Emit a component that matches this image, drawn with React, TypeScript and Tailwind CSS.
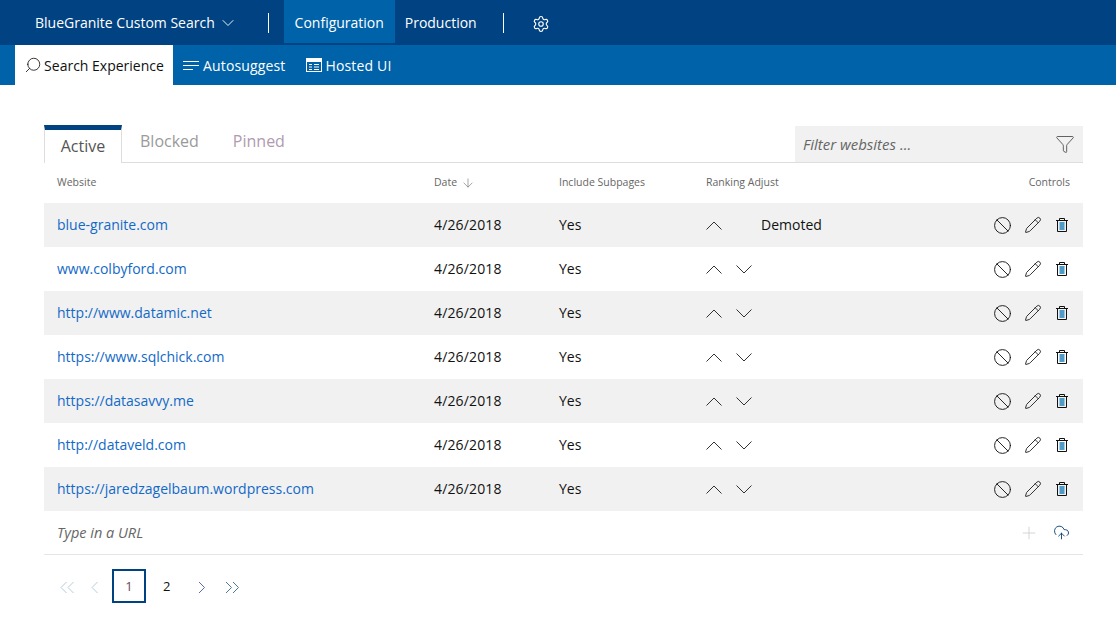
import { ArrowDown, ChevronDown, Search, Settings, Ban, Pencil, Funnel, Plus, CloudUpload } from 'lucide-react'

const SITES = [
  'blue-granite.com',
  'www.colbyford.com',
  'http://www.datamic.net',
  'https://www.sqlchick.com',
  'https://datasavvy.me',
  'http://dataveld.com',
  'https://jaredzagelbaum.wordpress.com',
]

function Chev({ dir, className }: { dir: 'up' | 'down'; className?: string }) {
  return (
    <svg width="16" height="9" viewBox="0 0 16 9" fill="none" stroke="currentColor" strokeWidth="1" className={className}>
      <path d={dir === 'up' ? 'M0.5 8.5 8 1l7.5 7.5' : 'M0.5 0.5 8 8l7.5-7.5'} />
    </svg>
  )
}

function PageChev({ dir, double, className }: { dir: 'left' | 'right'; double?: boolean; className?: string }) {
  const d = dir === 'left' ? 'M6.5 1 1 6.5 6.5 12' : 'M1 1l5.5 5.5L1 12'
  return (
    <svg width={double ? 14 : 8} height="13" viewBox={double ? '0 0 14 13' : '0 0 8 13'} fill="none" stroke="currentColor" strokeWidth="1" className={className}>
      <path d={d} />
      {double && <path d={d} transform="translate(7 0)" />}
    </svg>
  )
}

function TrashIcon() {
  return (
    <svg width="16" height="16" viewBox="0 0 16 16" fill="none" stroke="#111" strokeWidth="1">
      <path d="M2 3.5h12M5.5 3.5v-2h5v2M3.5 3.5v11h9v-11" />
      <rect x="5.5" y="5" width="5" height="8" fill="#4f9bc8" stroke="none" />
    </svg>
  )
}

function HostedIcon() {
  return (
    <svg width="16" height="14" viewBox="0 0 16 14" fill="none" stroke="white" strokeWidth="1">
      <rect x="0.5" y="0.5" width="15" height="13" />
      <rect x="0.5" y="0.5" width="15" height="3" fill="white" />
      <path d="M3 6.5h3M3 9h3M3 11.5h3M8 6.5h5M8 9h5M8 11.5h5" />
    </svg>
  )
}

function ListIcon() {
  return (
    <svg width="16" height="11" viewBox="0 0 16 11" fill="none" stroke="white" strokeWidth="1">
      <path d="M0 1.5h16M0 5.5h16M0 9.5h10" />
    </svg>
  )
}

function Row({ site, idx }: { site: string; idx: number }) {
  return (
    <div className={`flex h-11 items-center text-[14px] ${idx % 2 === 0 ? 'bg-[#f1f1f1]' : 'bg-white'}`}>
      <a className="w-[390px] pb-0.5 pl-[13px] text-[#1269c7]">{site}</a>
      <span className="w-[125px] pb-0.5 tracking-[0.15px] text-[#111]">4/26/2018</span>
      <span className="w-[147px] pb-0.5 text-[#111]">Yes</span>
      <div className="flex flex-1 items-center">
        <Chev dir="up" className="text-[#333]" />
        {idx === 0 ? (
          <span className="ml-[39px] pb-0.5 text-[#111]">Demoted</span>
        ) : (
          <Chev dir="down" className="ml-[14px] text-[#333]" />
        )}
      </div>
      <div className="flex items-center gap-[12px] pr-[13px]">
        <Ban size={19} strokeWidth={1.15} className="text-[#111]" />
        <Pencil size={18} strokeWidth={1.15} className="text-[#111]" />
        <TrashIcon />
      </div>
    </div>
  )
}

export default function App() {
  return (
    <div className="min-h-[636px] bg-white font-['Open_Sans',sans-serif]">
      {/* Top nav */}
      <div className="flex h-[45px] bg-[#004282] text-[14px] text-white">
        <div className="flex h-[45px] items-center pl-[35px]">
          <span>BlueGranite Custom Search</span>
          <ChevronDown size={20} strokeWidth={1.1} className="ml-[3px]" />
        </div>
        <div className="ml-[30px] mr-[15px] mt-[13px] h-[20px] w-px bg-white" />
        <div className="flex h-[43px] w-[111px] items-center justify-center bg-[#0062a8] pt-px">Configuration</div>
        <div className="flex h-[45px] items-center pl-[10px]">Production</div>
        <div className="ml-[26px] mt-[13px] h-[20px] w-px bg-white" />
        <div className="flex h-[47px] items-center pl-[28px]">
          <Settings size={18} strokeWidth={1.5} />
        </div>
      </div>

      {/* Sub nav */}
      <div className="flex h-10 items-center bg-[#0062a8] pl-[15px] text-[14px] text-white">
        <div className="flex h-10 w-[158px] items-center justify-center gap-[2px] bg-white text-[#111]">
          <Search size={18} strokeWidth={1.1} className="-scale-x-100" />
          Search Experience
        </div>
        <div className="ml-[10px] flex items-center gap-[4px] tracking-[0.15px]">
          <ListIcon />
          Autosuggest
        </div>
        <div className="ml-[20px] flex items-center gap-[4px] tracking-[0.15px]">
          <HostedIcon />
          Hosted UI
        </div>
      </div>

      <div className="ml-[44px] mr-[33px] pt-10">
        {/* Tabs */}
        <div className="flex h-[38px] items-end border-b border-[#ddd]">
          <div className="mb-[-1px] flex h-[38px] w-[78px] items-center justify-center border-x border-[#ddd] border-t-[5px] border-t-[#004282] bg-white pb-0.5 text-[16px] text-[#555]">
            Active
          </div>
          <div className="flex h-[38px] items-center pb-1 pl-[18px] text-[16px] text-[#9a9a9a]">Blocked</div>
          <div className="flex h-[38px] items-center pb-1 pl-[34px] text-[16px] text-[#b09ab0]">Pinned</div>
          <div className="ml-auto mt-px flex h-9 w-[288px] items-center justify-between self-start bg-[#f1f1f1] pl-2 pr-[8px]">
            <span className="pt-px text-[15px] italic text-[#666]">Filter websites ...</span>
            <Funnel size={20} strokeWidth={1} className="text-[#444]" />
          </div>
        </div>

        {/* Table header */}
        <div className="flex h-10 items-center text-[10.5px] text-[#666]">
          <span className="w-[390px] pl-[13px]">Website</span>
          <span className="flex w-[125px] items-center gap-1">
            Date <ArrowDown size={14} strokeWidth={1} />
          </span>
          <span className="w-[147px]">Include Subpages</span>
          <span className="flex-1">Ranking Adjust</span>
          <span className="pr-[13px]">Controls</span>
        </div>

        {SITES.map((site, i) => (
          <Row key={site} site={site} idx={i} />
        ))}

        {/* Add row */}
        <div className="flex h-11 items-center border-b border-[#e5e5e5] px-[13px] text-[14px]">
          <span className="text-[14.5px] italic text-[#666]">Type in a URL</span>
          <Plus size={20} strokeWidth={1} className="ml-auto text-[#ccc]" />
          <CloudUpload size={17} strokeWidth={1.25} className="ml-[14px] text-[#003a70]" />
        </div>

        {/* Pagination */}
        <div className="mt-[14px] flex items-center text-[13px] text-[#111]">
          <PageChev dir="left" double className="ml-[16px] mt-0.5 text-[#b4cdd8]" />
          <PageChev dir="left" className="ml-[17px] mt-0.5 text-[#b4cdd8]" />
          <div className="ml-[13px] flex h-[34px] w-[34px] items-center justify-center border-2 border-[#004282] pt-0.5 text-[#6b4a5a]">1</div>
          <span className="ml-[17px] pt-0.5">2</span>
          <PageChev dir="right" className="ml-[28px] mt-0.5 text-[#5a6ab0]" />
          <PageChev dir="right" double className="ml-[19px] mt-0.5 text-[#4a7a9a]" />
        </div>
      </div>
    </div>
  )
}
